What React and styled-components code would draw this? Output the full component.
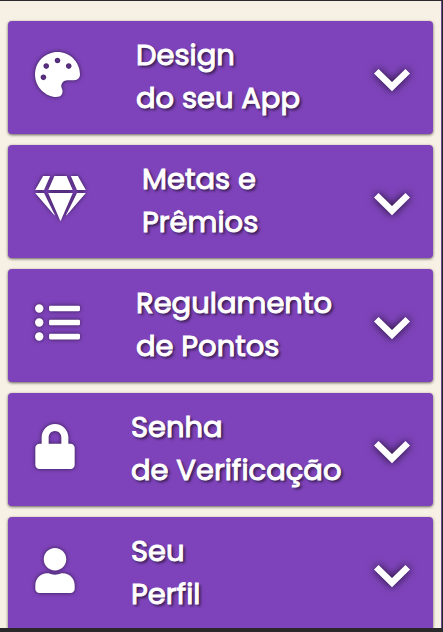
import React, { useState } from "react";
import styled, { createGlobalStyle } from "styled-components";
import { FaPalette, FaGem, FaListUl, FaLock, FaUser } from "react-icons/fa";

const GlobalStyle = createGlobalStyle`
  *, *::before, *::after { box-sizing: border-box; }
  body { margin: 0; background: #f7f0e4; }
`;

const Screen = styled.main`
  height: 100vh;
  overflow: hidden;
  background: #f7f0e4;
  border: solid #2a282b;
  border-width: 1px 1px 4px 0;
`;

const Menu = styled.nav`
  display: flex;
  flex-direction: column;
  gap: 11px;
  min-height: 100%;
  padding: 20px 8px 0;
  border-right: 1px solid #6a4a91;
`;

const MenuButton = styled.button`
  display: flex;
  align-items: center;
  flex-shrink: 0;
  width: 100%;
  padding: 13px 23px 14px 27px;
  border: 0;
  border-radius: 4px;
  background: #7e43ba;
  box-shadow: 0 1px 3px rgba(0, 0, 0, 0.6);
  color: #fff;
  font-family: Poppins, Inter, sans-serif;
  font-size: 29px;
  font-weight: 400;
  line-height: 43px;
  text-align: left;
  cursor: pointer;
`;

const IconSlot = styled.span`
  display: flex;
  flex-shrink: 0;
  width: ${({ $width }) => $width}px;
  margin-right: 56px;
  padding-bottom: 6px;

  svg {
    display: block;
    width: 100%;
    height: 45px;
    overflow: visible;
    filter: drop-shadow(0 0 2px rgba(0, 0, 0, 0.6));
  }
`;

const Label = styled.span`
  flex: 1;
  min-width: 0;
  white-space: nowrap;
  -webkit-text-stroke: 1px #fff;
  text-shadow: 2px 2px 3px rgba(0, 0, 0, 0.7);
`;

const Line = styled.span`
  display: block;
`;

const Chevron = styled.svg`
  display: block;
  flex-shrink: 0;
  width: 36px;
  height: 22px;
  margin-top: 5px;
  overflow: visible;
  fill: #fff;
  filter: drop-shadow(0 0 4px rgba(0, 0, 0, 0.8));
`;

const items = [
  { Icon: FaPalette, width: 45, lines: ["Design", "do seu App"] },
  { Icon: FaGem, width: 51, lines: ["Metas e", "Prêmios"] },
  { Icon: FaListUl, width: 45, lines: ["Regulamento", "de Pontos"] },
  { Icon: FaLock, width: 40, lines: ["Senha", "de Verificação"] },
  { Icon: FaUser, width: 40, lines: ["Seu", "Perfil"] },
];

export default function App() {
  const [open, setOpen] = useState(null);

  return (
    <>
      <GlobalStyle />
      <Screen>
        <Menu>
          {items.map(({ Icon, width, lines }, index) => (
            <MenuButton
              key={lines[0]}
              type="button"
              aria-expanded={open === index}
              onClick={() => setOpen(open === index ? null : index)}
            >
              <IconSlot $width={width}>
                <Icon aria-hidden="true" />
              </IconSlot>
              <Label>
                {lines.map((line) => (
                  <Line key={line}>{line}</Line>
                ))}
              </Label>
              <Chevron viewBox="0 0 36 22" aria-hidden="true">
                <path d="M4.5 0L18 13L31.5 0L36 4.5L18 22.3L0 4.5Z" />
              </Chevron>
            </MenuButton>
          ))}
        </Menu>
      </Screen>
    </>
  );
}
